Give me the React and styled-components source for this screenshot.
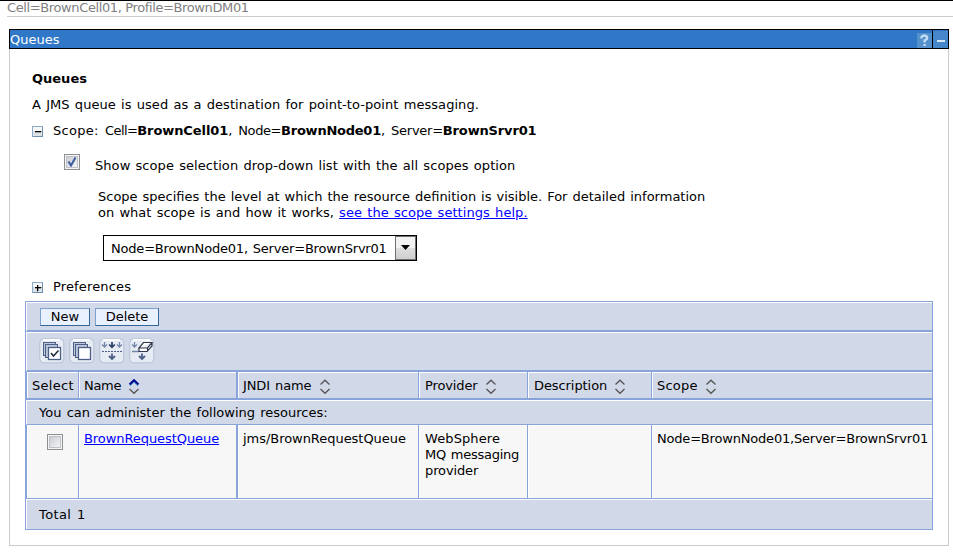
import React from "react";
import styled, { createGlobalStyle } from "styled-components";

const LINE = "#88a4da";
const FILL = "#d1d8e8";

const GlobalStyle = createGlobalStyle`
  * { box-sizing: border-box; }
  body {
    margin: 0;
    background: #fff;
    color: #000;
    font: 13px/16px Verdana, "DejaVu Sans", sans-serif;
    overflow: hidden;
  }
`;

const Page = styled.div`
  width: 953px;
  height: 552px;
  border-top: 1px solid #000;
`;

const Text = styled.span`
  white-space: nowrap;
  letter-spacing: ${(p) => p.$ls || 0}px;
  word-spacing: ${(p) => p.$ws || 0}px;
  font-weight: ${(p) => (p.$bold ? "bold" : "inherit")};
`;

const CellInfo = styled.div`
  margin-left: 7px;
  height: 16px;
  line-height: 13px;
  color: #808080;
  border-bottom: 1px solid #ccc;
`;

const Portlet = styled.section`
  margin: 12px 0 0 9px;
  width: 940px;
  height: 517px;
  border: 1px solid #ccc;
  border-top: 0;
`;

const TitleBar = styled.header`
  display: flex;
  align-items: flex-end;
  height: 20px;
  margin: 0 -1px;
  border: 1px solid #000;
  background: #3077c8;
  color: #fff;
`;

const TitleText = styled.div`
  flex: 1;
  line-height: 20px;
  height: 18px;
`;

const TitleIcon = styled.svg`
  display: block;
  width: 15px;
  height: 16px;
  ${(p) => p.$divided && "border-left: 1px solid #000; width: 16px; height: 18px;"}
`;

const Heading = styled.h1`
  margin: 22px 0 0 22px;
  font-size: 13px;
  line-height: 16px;
`;

const Intro = styled.p`
  margin: 10px 0 0 22px;
`;

const Toggle = styled.div`
  display: flex;
  align-items: center;
  gap: 10px;
  height: 16px;
  margin: ${(p) => p.$top}px 0 0 22px;
`;

const ToggleIcon = styled.svg`
  display: block;
  width: 11px;
  height: 11px;
`;

const CheckRow = styled.div`
  display: flex;
  align-items: flex-start;
  gap: 15px;
  margin: 15px 0 0 54px;
  height: 23px;
`;

const CheckLabel = styled.div`
  padding-top: 4px;
`;

const Box = styled.span`
  display: block;
  width: 16px;
  height: 16px;
  padding: 1px;
  border: 1px solid #8e8f8f;
  background: #f4f4f4;
`;

const BoxFace = styled.span`
  display: block;
  width: 12px;
  height: 12px;
  border: 1px solid #bfc3c9;
  background: linear-gradient(135deg, #cacdd4, #f4f4f5);
  svg { display: block; }
`;

const Help = styled.p`
  margin: 12px 0 0 88px;
  height: 32px;
`;

const Link = styled.a`
  color: #00f;
  text-decoration: underline;
`;

const Select = styled.div`
  display: flex;
  width: 314px;
  height: 26px;
  margin: 14px 0 0 93px;
  border: 1px solid #000;
  padding-left: 7px;
  line-height: 25px;
`;

const SelectText = styled.div`
  flex: 1;
`;

const SelectArrow = styled.div`
  display: flex;
  align-items: center;
  justify-content: center;
  width: 21px;
  padding-bottom: 1px;
  border: 1px solid #707070;
  background: linear-gradient(#f2f2f2 0 48%, #dedede 52%, #cfcfcf);
`;

const Table = styled.div`
  width: 908px;
  margin: 6px 0 0 15px;
  border: 1px solid ${LINE};
  background: ${FILL};
`;

const Bar = styled.div`
  display: flex;
  align-items: center;
  gap: ${(p) => p.$gap || 0}px;
  height: ${(p) => p.$h}px;
  padding: 0 0 ${(p) => p.$pb || 0}px ${(p) => p.$pl || 12}px;
  border-top: 1px solid #fff;
  border-left: 1px solid #fff;
  border-bottom: ${(p) => p.$line}px solid ${LINE};
`;

const Button = styled.button`
  width: ${(p) => p.$w}px;
  height: 18px;
  padding: 0;
  border: 1px solid;
  border-color: #7da1cf #336699 #336699 #7da1cf;
  background: #e9f0ff;
  color: #000;
  font: inherit;
  line-height: 16px;
  text-align: center;
`;

const ToolIcon = styled.svg`
  display: block;
  width: 26px;
  height: 26px;
`;

const Row = styled.div`
  display: grid;
  grid-template-columns: 53px 159px 181px 109px 124px 280px;
  height: ${(p) => p.$h}px;
  border-bottom: ${(p) => p.$line}px solid ${LINE};
`;

const Cell = styled.div`
  display: ${(p) => (p.$head ? "flex" : "block")};
  align-items: center;
  gap: 7px;
  padding: ${(p) => (p.$head ? "1px 0 0" : "6px 0 0")};
  padding-left: ${(p) => p.$pl || 5}px;
  border: solid ${LINE};
  border-width: 0 ${(p) => p.$right ?? 1}px 0 ${(p) => p.$left || 0}px;
  box-shadow: inset 1px 1px 0 #fff;
  background: ${(p) => (p.$head ? FILL : "#f7f7f7")};
  white-space: nowrap;
`;

const SelectCell = styled(Cell)`
  padding: 9px 0 0 20px;
`;

const SortIcon = styled.svg`
  display: block;
  width: 12px;
  height: 16px;
  margin-top: 2px;
`;

function Sort({ active }) {
  return (
    <SortIcon viewBox="0 0 12 16" fill="none" strokeWidth={active ? 2 : 1.3}>
      <path d="M1.500 5.500 6 1.200 10.500 5.500" stroke={active ? "#000092" : "#555"} />
      {active && <path d="M2 6.800 6 3.200 10 6.800" stroke="#3393c8" strokeWidth="1" />}
      <path d="M1.500 10 6 14.300 10.500 10" stroke="#555" strokeWidth="1.300" />
    </SortIcon>
  );
}

function Expander({ open }) {
  return (
    <ToggleIcon viewBox="0 0 11 11" shapeRendering="crispEdges">
      <rect x=".5" y=".5" width="10" height="10" fill="#dde2e6" stroke="#8babc9" />
      <path d="M1 10.500H10.500V1" fill="none" stroke="#7391ae" />
      <rect x="1" y="1" width="9" height="4" fill="#f5f7f8" />
      <path d={open ? "M3 5h6v1H3z" : "M3 5h6v1H3zM5 3h1v6H5z"} fill="#000" stroke="#000" strokeWidth=".3" />
    </ToggleIcon>
  );
}

function Tool({ kind }) {
  const ink = "#4d5f86";
  return (
    <ToolIcon viewBox="0 0 26 26" fill="none" stroke={ink}>
      <rect x=".8" y=".8" width="24" height="24" rx="4" fill="#e7ebf3" stroke="#b5c1d6" />
      <path d="M4 1.800h17" stroke="#fff" strokeWidth="1.500" />
      {(kind === "all" || kind === "none") && (
        <>
          <rect x="4.500" y="4.500" width="12" height="13" fill="#bdc8dc" />
          <rect x="6.500" y="6.500" width="12" height="13" fill="#bdc8dc" />
          <rect x="9.500" y="9.500" width="12" height="12" fill="#fff" strokeWidth="1.300" />
          {kind === "all" && <path d="m12 15 2.500 3 5-5.500" stroke="#222d40" strokeWidth="1.600" />}
        </>
      )}
      {kind === "filter" && (
        <>
          <path d="M5.500 4v5M20.500 4v5M3 6.500l2.500 2.500L8 6.500M18 6.500l2.500 2.500L23 6.500" stroke="#7187ab" strokeWidth="1.300" />
          <path d="M13 4v5M10.200 6.500 13 9.300l2.800-2.800" stroke="#2f3f66" strokeWidth="1.700" />
          <path d="M3 13.500h20" strokeDasharray="2 1" />
          <path d="M13 15.500v5.500M10 18l3 3 3-3" strokeWidth="1.800" />
        </>
      )}
      {kind === "clear" && (
        <>
          <path d="M5.500 4v5M3 6.500l2.500 2.500L8 6.500M3 13.500h7" stroke="#7187ab" strokeWidth="1.300" />
          <path d="m10 10 4.500-5.500H23L18.500 10zM10 10v3.500h8l5-5.500V4.500M18.500 10v3.500" fill="#fff" stroke="#303b50" strokeWidth="1.200" />
          <path d="M13 15.500v5.500M10 18l3 3 3-3" strokeWidth="1.800" />
        </>
      )}
    </ToolIcon>
  );
}

const columns = [
  { name: "Select", ls: 0.3 },
  { name: "Name", ls: -0.3 },
  { name: "JNDI name", ls: -0.1, ws: 1 },
  { name: "Provider", ls: -0.12, pl: 6 },
  { name: "Description", ls: -0.08, pl: 6 },
  { name: "Scope", ls: 0.2 },
];

export default function App() {
  return (
    <Page>
      <GlobalStyle />
      <CellInfo><Text $ls={-0.38}>Cell=BrownCell01, Profile=BrownDM01</Text></CellInfo>
      <Portlet>
        <TitleBar>
          <TitleText><Text>Queues</Text></TitleText>
          <TitleIcon viewBox="0 0 15 16">
            <rect width="15" height="15" y="1" fill="#5490cb" />
            <path d="M4.500 6.500V5Q7.500 2 10 4.800 10.700 7 7.600 8.500V10.500M7.600 12v2" fill="none" stroke="#c3dcf5" strokeWidth="2.400" />
          </TitleIcon>
          <TitleIcon viewBox="0 0 15 18" $divided>
            <rect width="15" height="17" y="1" fill="#4587ca" />
            <path d="M4 11h8" stroke="#d5e8fc" strokeWidth="2" />
          </TitleIcon>
        </TitleBar>
        <Heading><Text>Queues</Text></Heading>
        <Intro><Text $ws={1} $ls={0.06}>A JMS queue is used as a destination for point-to-point messaging.</Text></Intro>
        <Toggle $top={10}>
          <Expander open />
          <Text>
            <Text $ls={0.28} $ws={2}>Scope: </Text>
            <Text $ls={-0.6}>Cell=</Text>
            <Text $bold $ls={-0.09}>BrownCell01</Text>
            <Text $ls={0.4} $ws={1}>, </Text>
            <Text $ls={-0.4}>Node=</Text>
            <Text $bold $ls={-0.24}>BrownNode01</Text>
            <Text $ls={0.4} $ws={1}>, </Text>
            <Text $ls={-0.25}>Server=</Text>
            <Text $bold $ls={-0.15}>BrownSrvr01</Text>
          </Text>
        </Toggle>
        <CheckRow>
          <Box><BoxFace><svg width="10" height="10" viewBox="0 0 10 10"><path d="m1.500 4.500 2.500 4L8.500.5" fill="none" stroke="#3c5a9e" strokeWidth="2" /></svg></BoxFace></Box>
          <CheckLabel><Text $ws={1} $ls={0.065}>Show scope selection drop-down list with the all scopes option</Text></CheckLabel>
        </CheckRow>
        <Help>
          <Text $ws={0.85}>Scope specifies the level at which the resource definition is visible. For detailed information</Text><br />
          <Text $ws={1} $ls={0.03}>on what scope is and how it works, </Text>
          <Link><Text $ws={1} $ls={0.06}>see the scope settings help.</Text></Link>
        </Help>
        <Select>
          <SelectText><Text $ws={1} $ls={-0.2}>Node=BrownNode01, Server=BrownSrvr01</Text></SelectText>
          <SelectArrow><svg width="9" height="5"><path d="M0 0h9L4.500 5z" /></svg></SelectArrow>
        </Select>
        <Toggle $top={18}><Expander /><Text $ls={0.15}>Preferences</Text></Toggle>
        <Table>
          <Bar $h={30} $line={2} $gap={5} $pl={13}>
            <Button $w={50}><Text>New</Text></Button>
            <Button $w={64}><Text>Delete</Text></Button>
          </Bar>
          <Bar $h={40} $line={2} $gap={4} $pb={2}>
            <Tool kind="all" /><Tool kind="none" /><Tool kind="filter" /><Tool kind="clear" />
          </Bar>
          <Row $h={28} $line={2}>
            {columns.map(({ name, ls, ws, pl }, i) => (
              <Cell key={name} $head $pl={pl} $left={i === 0 ? 1 : 0} $right={i === 1 ? 2 : i === 5 ? 0 : 1}>
                <Text $ls={ls} $ws={ws}>{name}</Text>
                {i > 0 && <Sort active={i === 1} />}
              </Cell>
            ))}
          </Row>
          <Bar $h={25} $line={1}><Text $ws={1.1}>You can administer the following resources:</Text></Bar>
          <Row $h={74} $line={1}>
            <SelectCell $left={1}><Box><BoxFace /></Box></SelectCell>
            <Cell $right={2}><Link><Text $ls={-0.07}>BrownRequestQueue</Text></Link></Cell>
            <Cell><Text $ls={-0.04}>jms/BrownRequestQueue</Text></Cell>
            <Cell $pl={6}>
              <Text $ls={0.1}>WebSphere</Text><br />
              <Text $ws={1} $ls={-0.25}>MQ messaging</Text><br />
              <Text $ls={-0.12}>provider</Text>
            </Cell>
            <Cell />
            <Cell $right={0}><Text $ls={-0.19}>Node=BrownNode01,Server=BrownSrvr01</Text></Cell>
          </Row>
          <Bar $h={30} $line={0}><Text $ls={0.4} $ws={1}>Total 1</Text></Bar>
        </Table>
      </Portlet>
    </Page>
  );
}
